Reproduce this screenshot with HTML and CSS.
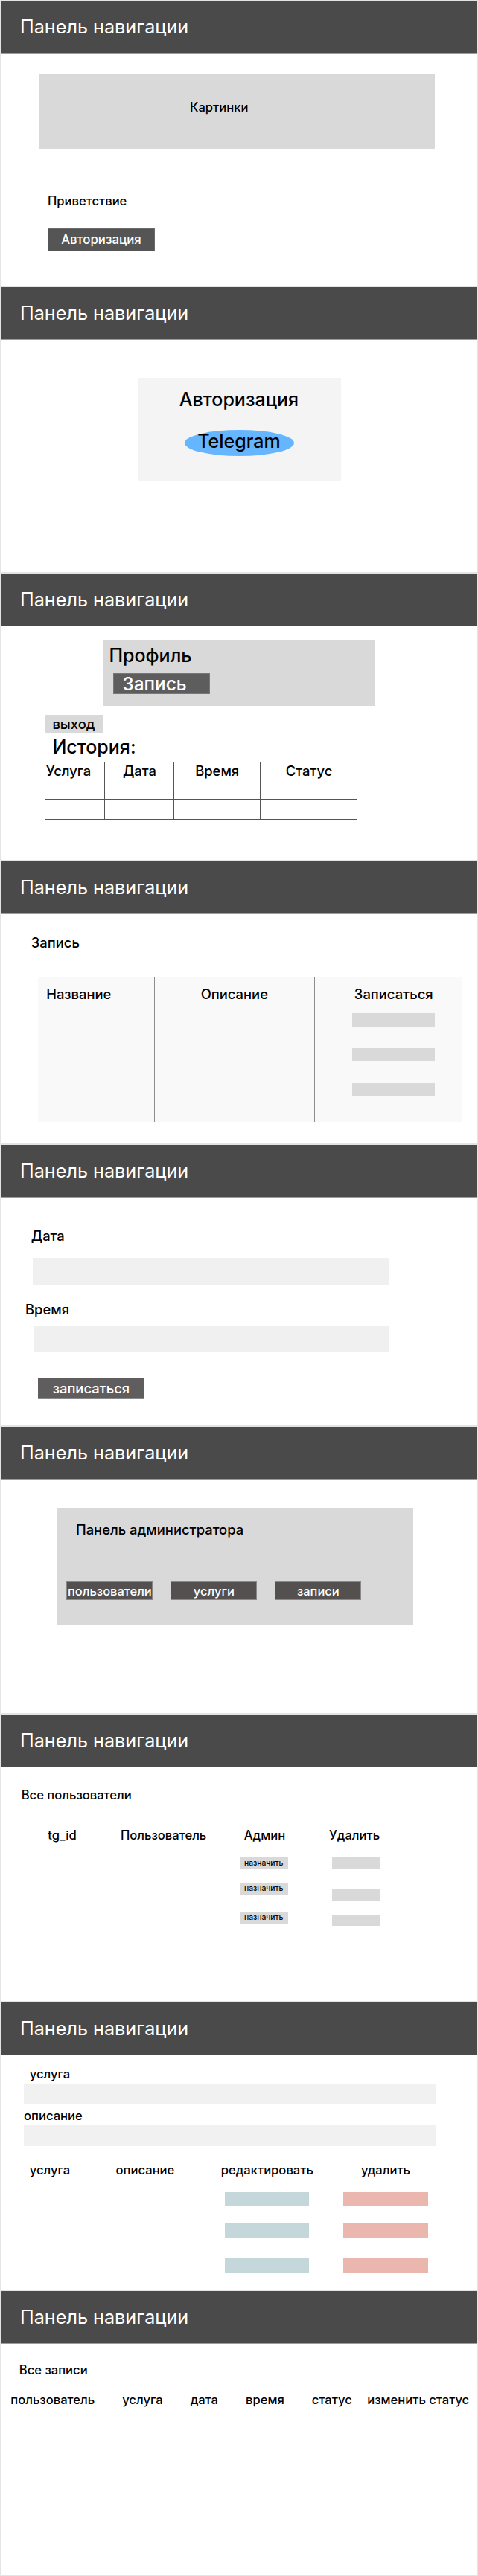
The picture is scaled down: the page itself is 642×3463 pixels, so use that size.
FILE: index.html
```html
<!DOCTYPE html>
<html lang="ru">
<head>
<meta charset="utf-8">
<title>Макет</title>
<link rel="stylesheet" href="styles.css">
</head>
<body>

<section class="frame f1">
  <header class="nav">Панель навигации</header>
  <div class="pics">Картинки</div>
  <p class="greet t17">Приветствие</p>
  <button class="btn-auth">Авторизация</button>
</section>

<section class="frame f2">
  <header class="nav">Панель навигации</header>
  <div class="auth-box">
    <h2 class="t25">Авторизация</h2>
    <div class="tg">Telegram</div>
  </div>
</section>

<section class="frame f3">
  <header class="nav">Панель навигации</header>
  <div class="profile">
    <h2 class="t25">Профиль</h2>
    <div class="btn-rec">Запись</div>
  </div>
  <div class="logout">выход</div>
  <h2 class="history t25">История:</h2>
  <div class="hist-table">
    <div class="hc hc1">Услуга</div><div class="hc">Дата</div><div class="hc">Время</div><div class="hc">Статус</div>
    <div class="hr hc1"></div><div class="hr"></div><div class="hr"></div><div class="hr"></div>
    <div class="hr hc1"></div><div class="hr"></div><div class="hr"></div><div class="hr"></div>
  </div>
</section>

<section class="frame f4">
  <header class="nav">Панель навигации</header>
  <p class="rec-title t18">Запись</p>
  <div class="rec-table">
    <div class="rc rc1 t18">Название</div>
    <div class="rc rc2 t18">Описание</div>
    <div class="rc rc3">
      <span class="t18">Записаться</span>
      <span class="rbar"></span>
      <span class="rbar"></span>
      <span class="rbar"></span>
    </div>
  </div>
</section>

<section class="frame f5">
  <header class="nav">Панель навигации</header>
  <p class="lbl-date t18">Дата</p>
  <div class="field field-date"></div>
  <p class="lbl-time t18">Время</p>
  <div class="field field-time"></div>
  <button class="btn-sign">записаться</button>
</section>

<section class="frame f6">
  <header class="nav">Панель навигации</header>
  <div class="admin">
    <h2 class="admin-title t18">Панель администратора</h2>
    <div class="admin-btns">
      <span class="abtn">пользователи</span>
      <span class="abtn">услуги</span>
      <span class="abtn">записи</span>
    </div>
  </div>
</section>

<section class="frame f7">
  <header class="nav">Панель навигации</header>
  <p class="users-title t17">Все пользователи</p>
  <div class="users">
    <div class="ucol"><span class="t17">tg_id</span></div>
    <div class="ucol"><span class="t17">Пользователь</span></div>
    <div class="ucol ucol-admin">
      <span class="t17 uh-admin">Админ</span>
      <span class="assign a1">назначить</span>
      <span class="assign a2">назначить</span>
      <span class="assign a3">назначить</span>
    </div>
    <div class="ucol ucol-del">
      <span class="t17">Удалить</span>
      <span class="dbar d1"></span>
      <span class="dbar d2"></span>
      <span class="dbar d3"></span>
    </div>
  </div>
</section>

<section class="frame f8">
  <header class="nav">Панель навигации</header>
  <p class="lbl-svc t17">услуга</p>
  <div class="field field-svc"></div>
  <p class="lbl-desc t17">описание</p>
  <div class="field field-desc"></div>
  <div class="svc-table">
    <div class="scol scol1"><span class="t17">услуга</span></div>
    <div class="scol scol2"><span class="t17">описание</span></div>
    <div class="scol scol3">
      <span class="t17">редактировать</span>
      <span class="sbar edit b1"></span>
      <span class="sbar edit b2"></span>
      <span class="sbar edit b3"></span>
    </div>
    <div class="scol scol4">
      <span class="t17">удалить</span>
      <span class="sbar del b1"></span>
      <span class="sbar del b2"></span>
      <span class="sbar del b3"></span>
    </div>
  </div>
</section>

<section class="frame f9">
  <header class="nav">Панель навигации</header>
  <p class="all-title t17">Все записи</p>
  <div class="all-cols">
    <span class="t17">пользователь</span>
    <span class="t17">услуга</span>
    <span class="t17">дата</span>
    <span class="t17">время</span>
    <span class="t17">статус</span>
    <span class="t17 last">изменить статус</span>
  </div>
</section>

</body>
</html>
```

FILE: styles.css
```css
* { box-sizing: border-box; margin: 0; padding: 0; }

body {
  margin: 0;
  width: 642px;
  background: #fff;
  color: #000;
  font-family: Inter, "Noto Sans", sans-serif;
}

button { font-family: inherit; border: 0; }

.frame {
  border: 1px solid #e4e4e4;
  overflow: hidden;
}
.f1 { height: 385px; }
.f2 { height: 385px; }
.f3 { height: 387px; }
.f4 { height: 381px; }
.f5 { height: 379px; }
.f6 { height: 387px; }
.f7 { height: 387px; }
.f8 { height: 388px; }
.f9 { height: 384px; }

.nav {
  height: 71px;
  background: #4a4a4a;
  border-bottom: 1px solid #9c9c9c;
  display: flex;
  align-items: center;
  padding-left: 26px;
  color: #fff;
  font-size: 25.2px;
  line-height: 30px;
  font-weight: 400;
}

.t25 { font-size: 25px; line-height: 30px; font-weight: 500; }
.t18 { font-size: 18.4px; line-height: 22px; font-weight: 500; }
.t17 { font-size: 16.6px; line-height: 20px; font-weight: 500; }

/* 1 */
.pics {
  margin: 27px 0 0 51px;
  width: 532px;
  height: 101px;
  background: #d9d9d9;
  padding: 35px 0 0 203px;
  font-size: 16.6px;
  line-height: 20px;
  font-weight: 500;
}
.greet { margin-top: 60px; padding-left: 63px; }
.btn-auth {
  display: flex;
  align-items: center;
  justify-content: center;
  margin: 27px 0 0 63px;
  width: 144px;
  height: 30.5px;
  background: #555;
  border: 1px solid #6a6a6a;
  color: #fff;
  font-size: 16.8px;
  font-weight: 500;
}

/* 2 */
.auth-box {
  margin: 51px auto 0;
  width: 273px;
  height: 139px;
  background: #f4f4f4;
  padding-top: 13.8px;
  text-align: center;
}
.tg {
  margin: 26.2px auto 0;
  width: 147px;
  height: 35px;
  border-radius: 50%;
  background: #66b5ff;
  font-size: 25px;
  line-height: 30px;
  font-weight: 500;
  text-align: center;
}

/* 3 */
.profile {
  margin: 19px 0 0 137.4px;
  width: 365px;
  height: 88px;
  background: #d9d9d9;
  padding: 4.8px 0 0 8px;
}
.btn-rec {
  margin: 9.2px 0 0 5.4px;
  width: 130px;
  height: 28px;
  background: #5d5d5d;
  border: 1px solid #777;
  color: #fff;
  font-size: 24.4px;
  line-height: 26px;
  font-weight: 500;
  padding-left: 11.6px;
}
.logout {
  margin: 12px 0 0 60px;
  width: 77px;
  height: 24px;
  background: #d9d9d9;
  font-size: 18.4px;
  line-height: 24px;
  font-weight: 500;
  padding-left: 9.4px;
}
.history { margin-top: 4.1px; padding-left: 69.4px; }
.hist-table {
  margin: 4.9px 0 0 60px;
  display: grid;
  grid-template-columns: 79.4px 93px 115.6px 131px;
  grid-template-rows: 25px 26px 27px;
}
.hc, .hr {
  border-bottom: 1px solid #555;
  border-left: 1px solid #555;
}
.hc1 { border-left: 0; }
.hc {
  font-size: 18.4px;
  line-height: 24px;
  font-weight: 500;
  text-align: center;
}
.hc.hc1 { text-align: left; padding-left: 0.8px; }

/* 4 */
.rec-title { margin-top: 26.7px; padding-left: 40.8px; }
.rec-table {
  margin: 35.6px 0 0 49.8px;
  width: 570px;
  height: 195px;
  background: #f9f9f9;
  display: grid;
  grid-template-columns: 156.2px 214.7px 1fr;
}
.rc { padding-top: 11.7px; }
.rc1 { padding-left: 11.4px; }
.rc2 { border-left: 1px solid #8d8d8d; text-align: center; }
.rc3 {
  border-left: 1px solid #8d8d8d;
  display: flex;
  flex-direction: column;
  align-items: center;
  padding-left: 14px;
}
.rbar {
  display: block;
  width: 111px;
  height: 18px;
  background: #d9d9d9;
  margin-top: 29px;
}
.rc3 .rbar:nth-child(2) { margin-top: 15.3px; }

/* 5 */
.lbl-date { margin-top: 39.7px; padding-left: 40.8px; }
.field { background: #f0f0f0; }
.field-date { margin: 19.6px 0 0 43.2px; width: 478.6px; height: 36.7px; }
.lbl-time { margin-top: 21px; padding-left: 33px; }
.field-time { margin: 12.3px 0 0 44.9px; width: 477px; height: 34px; }
.btn-sign {
  display: flex;
  align-items: center;
  justify-content: center;
  margin: 34.7px 0 0 50.2px;
  width: 142.5px;
  height: 29.3px;
  background: #5f5d5d;
  border-bottom: 1px solid #8a8a8a;
  color: #fff;
  font-size: 18.4px;
  font-weight: 500;
}

/* 6 */
.admin {
  margin: 38px 0 0 75.2px;
  width: 479px;
  height: 157px;
  background: #d9d9d9;
  padding-top: 18px;
}
.admin-title { padding-left: 25.8px; }
.admin-btns {
  display: flex;
  gap: 23.8px;
  margin-top: 59px;
  padding-left: 13.1px;
}
.abtn {
  display: flex;
  align-items: center;
  justify-content: center;
  width: 116.2px;
  height: 25.3px;
  background: #545050;
  border: 1px solid #888;
  color: #fff;
  font-size: 16.5px;
  font-weight: 500;
  white-space: nowrap;
}

/* 7 */
.users-title { margin-top: 26.7px; padding-left: 27.7px; }
.users {
  margin: 34px 0 0 63.3px;
  display: grid;
  grid-template-columns: 97.7px 159.3px 120.7px 70px;
}
.ucol { display: flex; flex-direction: column; align-items: flex-start; }
.uh-admin { padding-left: 6.5px; }
.assign {
  display: block;
  width: 65px;
  height: 15.5px;
  background: #d9d9d9;
  font-size: 10.3px;
  line-height: 15.5px;
  font-weight: 500;
  text-align: center;
  margin-left: 0.5px;
}
.a1 { margin-top: 20.6px; }
.a2 { margin-top: 18.6px; }
.a3 { margin-top: 23.4px; }
.dbar {
  display: block;
  width: 64.7px;
  height: 15.6px;
  background: #d9d9d9;
  margin-left: 4.3px;
}
.d1 { margin-top: 20.6px; }
.d2 { margin-top: 26.6px; }
.d3 { margin-top: 18.7px; }

/* 8 */
.lbl-svc { margin-top: 15px; padding-left: 38.7px; }
.field-svc { margin: 3.3px 0 0 31px; width: 553px; height: 28px; background: #f1f1f1; }
.lbl-desc { margin-top: 4.7px; padding-left: 31px; }
.field-desc { margin: 3px 0 0 31px; width: 553px; height: 27.7px; background: #f1f1f1; }
.svc-table {
  margin: 22.6px 0 0 38.7px;
  display: grid;
  grid-template-columns: 115.9px 130px 146.4px 172px;
}
.scol { display: flex; flex-direction: column; align-items: flex-start; }
.scol3, .scol4 { align-items: center; }
.sbar { display: block; width: 113.4px; height: 19px; }
.edit { background: #c4d7da; }
.del { background: #ebb6ad; }
.b1 { margin-top: 20px; }
.b2 { margin-top: 23px; }
.b3 { margin-top: 27.4px; }

/* 9 */
.all-title { margin-top: 25px; padding-left: 24.8px; }
.all-cols {
  display: flex;
  gap: 37px;
  margin-top: 20.3px;
  padding-left: 13.3px;
  white-space: nowrap;
}
.all-cols .last { margin-left: -16.6px; }
```
